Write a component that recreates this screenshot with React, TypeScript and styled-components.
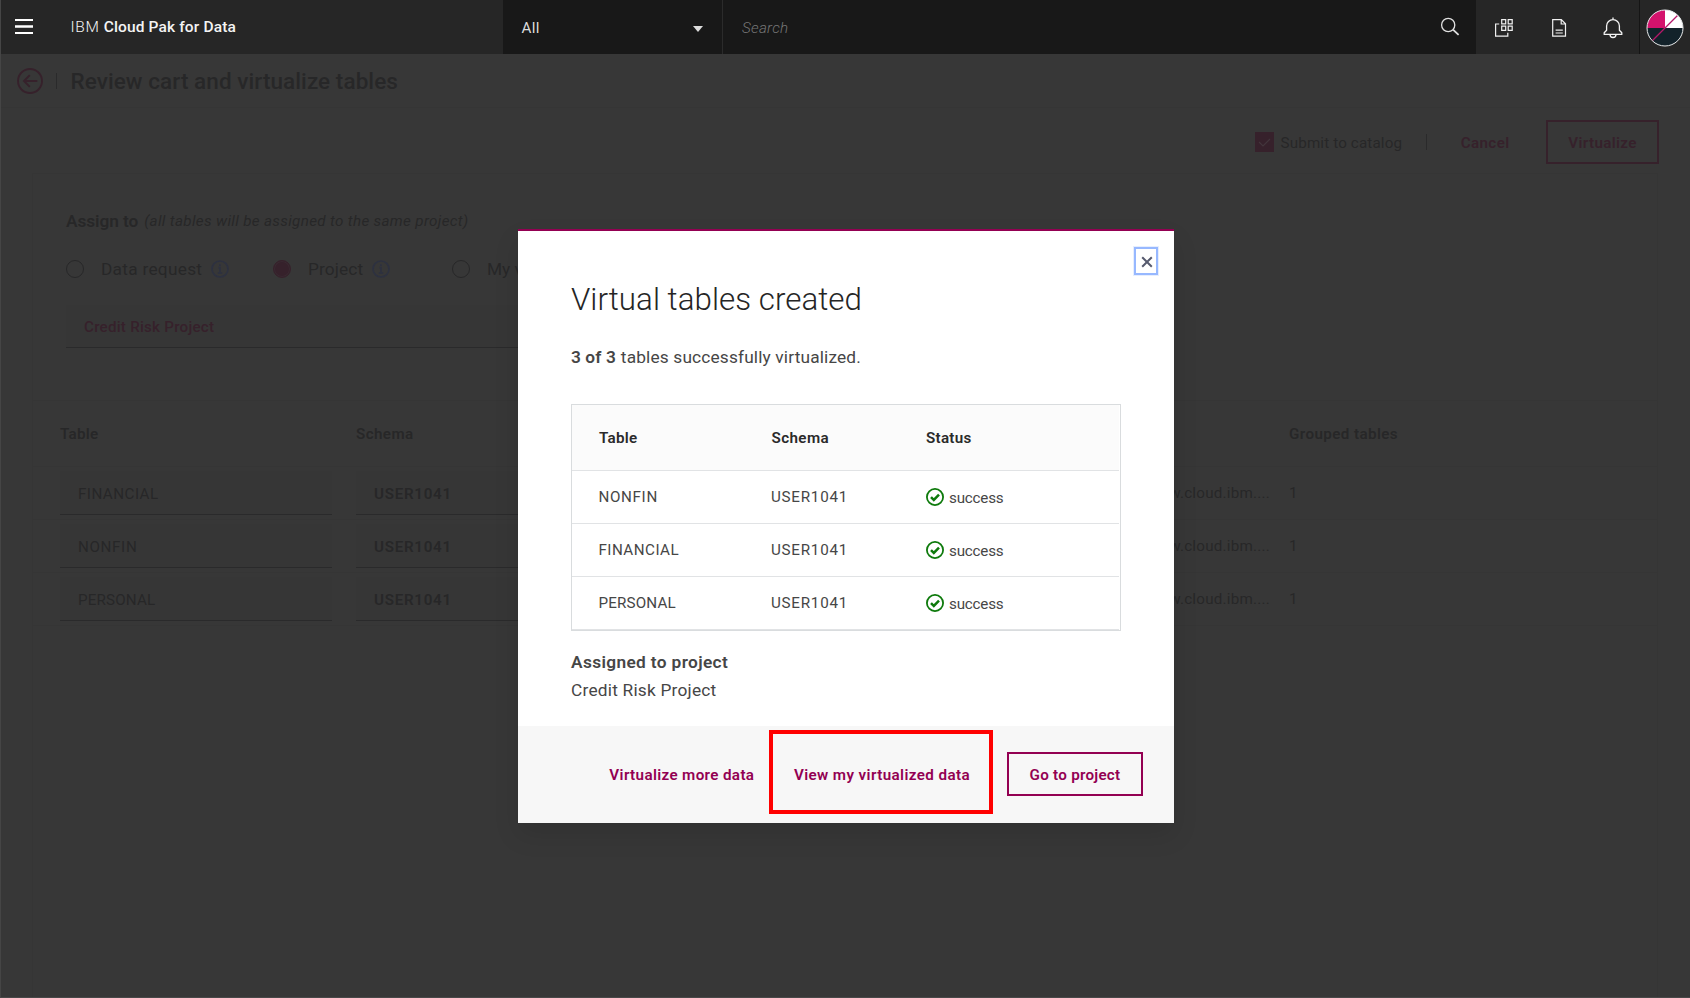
import React from "react";
import styled, { createGlobalStyle } from "styled-components";

const GlobalStyle = createGlobalStyle`
  *, *::after { box-sizing: border-box; }
  body {
    margin: 0;
    background: #373737;
    font-family: Roboto, "Liberation Sans", sans-serif;
    font-size: 15.2px;
    overflow: hidden;
  }
  h1, h2, p { margin: 0; font-weight: inherit; font-size: inherit; }
  button { font: inherit; background: none; border: 0; padding: 0; }
`;

const dim = {
  bg: "#373737",
  field: "#363636",
  line: "#353535",
  text: "#272728",
  soft: "#2a2a2b",
  pink: "#36212b",
  blue: "#2d3140",
};
const magenta = "#930052";

type TextProps = { $track?: number; $weight?: number; $size?: number; $italic?: boolean; $color?: string };

const Text = styled.span<TextProps>`
  letter-spacing: ${(p) => p.$track ?? 0}px;
  font-weight: ${(p) => p.$weight ?? 400};
  font-size: ${(p) => p.$size ?? 15.2}px;
  font-style: ${(p) => (p.$italic ? "italic" : "normal")};
  color: ${(p) => p.$color ?? "inherit"};
  white-space: nowrap;
`;

/* ---------- shell ---------- */
const Page = styled.div`
  position: relative;
  height: 998px;
  display: flex;
  flex-direction: column;
  border-left: 1px solid #454545;
  border-bottom: 1px solid #484848;
  background: ${dim.bg};
  color: ${dim.text};
  overflow: hidden;
`;

const Header = styled.header`
  flex: none;
  height: 54px;
  display: flex;
  background: #262626;
  color: #f4f4f4;
`;

const Brand = styled.div`
  width: 502px;
  display: flex;
  align-items: center;
  padding-left: 14px;
`;

const Product = styled.div`
  display: flex;
  gap: 4px;
  margin-left: 37.5px;
`;

const ScopeSelect = styled.div`
  width: 220px;
  display: flex;
  align-items: center;
  justify-content: space-between;
  padding: 1px 19px 0 18.5px;
  background: #181818;
  border-right: 1px solid #2b2b2b;
  color: #dcdcdc;
`;

const Caret = styled.i`
  margin-top: 3px;
  border: 5.5px solid transparent;
  border-top: 6px solid #dcdcdc;
  border-bottom: 0;
`;

const SearchBox = styled.div`
  flex: 1;
  display: flex;
  align-items: center;
  justify-content: space-between;
  padding: 0 16px 0 19px;
  background: #181818;

  span { padding-top: 2px; }
`;

const HeaderTools = styled.div`
  width: 214px;
  display: grid;
  grid-template-columns: 56px 54px 53px 51px;
`;

const Tool = styled.div<{ $divided?: boolean }>`
  display: flex;
  align-items: center;
  justify-content: center;
  padding-top: 1px;
  border-left: ${(p) => (p.$divided ? "1px solid #151515" : "0")};
`;

/* ---------- page behind the dialog ---------- */
const TitleBar = styled.div`
  flex: none;
  height: 54px;
  display: flex;
  align-items: center;
  padding-left: 16px;
  border-bottom: 1px solid ${dim.line};
`;

const Separator = styled.i`
  width: 1px;
  height: 16px;
  background: ${dim.soft};
`;

const BackMark = styled.div`
  display: flex;
  align-items: center;
  gap: 13px;
  margin-right: 13.5px;
`;

const Actions = styled.div`
  flex: none;
  height: 65px;
  padding: 12px 31px 0 0;
  display: flex;
  justify-content: flex-end;
`;

const ActionGroup = styled.div`
  height: 44px;
  display: flex;
  align-items: center;

  span { position: relative; top: 1px; }
`;

const Checkbox = styled.div`
  width: 19px;
  height: 20px;
  margin-right: 7px;
  display: flex;
  align-items: center;
  justify-content: center;
  background: ${dim.pink};
`;

const ActionSeparator = styled(Separator)`
  margin: 0 33.5px 0 24px;
`;

const Outline = styled.button<{ $w: number; $color: string }>`
  width: ${(p) => p.$w}px;
  height: 44px;
  border: 2px solid ${(p) => p.$color};
  color: ${(p) => p.$color};
`;

const VirtualizeButton = styled(Outline)`
  margin-left: 36.5px;
`;

const Card = styled.section`
  flex: 1;
  margin: 0 32px 0 31px;
  border: 1px solid #353535;
  border-bottom: 0;
  background: #373737;
`;

const AssignLine = styled.div`
  height: 30px;
  margin: 32px 0 0 33px;
  display: flex;
  align-items: center;
  gap: 6px;
`;

const RadioRow = styled.div`
  height: 30px;
  margin: 18px 0 0 33px;
  display: grid;
  grid-template-columns: 207px 179px auto;
  align-items: center;
`;

const RadioOption = styled.div`
  display: flex;
  align-items: center;
`;

const RadioDot = styled.i<{ $on?: boolean }>`
  width: 18px;
  height: 18px;
  margin-right: 17px;
  border-radius: 50%;
  border: 1px solid ${(p) => (p.$on ? dim.pink : dim.text)};
  background: ${(p) => (p.$on ? dim.pink : "transparent")};
  box-shadow: ${(p) => (p.$on ? "inset 0 0 0 1px #3a2a32" : "none")};
`;

const InfoGap = styled.div`
  display: flex;
  margin-left: 9px;
`;

const ProjectSelect = styled.div`
  width: 620px;
  height: 43px;
  margin: 21px 0 52px 33px;
  padding: 2px 0 0 18px;
  display: flex;
  align-items: center;
  background: ${dim.field};
  border-bottom: 1px solid #2a2a2b;
`;

const CartRow = styled.div<{ $head?: boolean }>`
  height: ${(p) => (p.$head ? 67 : 53)}px;
  padding-left: 27px;
  display: grid;
  grid-template-columns: 272px 272px 617px 1fr;
  column-gap: 24px;
  align-items: center;
  border-top: ${(p) => (p.$head ? `1px solid ${dim.line}` : "0")};
  border-bottom: 1px solid ${dim.line};
`;

const CartField = styled.div`
  height: 44px;
  padding: 2px 0 0 18px;
  display: flex;
  align-items: center;
  background: ${dim.field};
  border-bottom: 1px solid #2a2a2b;
`;

const HostCell = styled.div`
  margin-right: -1px;
  text-align: right;
`;

const GroupCell = styled.div`
  margin-left: -4px;
`;

/* ---------- dialog ---------- */
const Overlay = styled.div`
  position: absolute;
  inset: 54px 0 -1px 1px;
  display: flex;
  align-items: center;
  justify-content: center;
`;

const Dialog = styled.div`
  position: relative;
  width: 656px;
  height: 594px;
  display: flex;
  flex-direction: column;
  background: #fff;
  border-top: 2px solid ${magenta};
  box-shadow: 0 12px 24px rgba(0, 0, 0, 0.1);
  color: #464646;
`;

const DialogBody = styled.div`
  flex: 1;
  padding: 48px 53px 0 54px;
`;

const DialogTitle = styled.h2`
  height: 40px;
  line-height: 42px;
  margin-left: -1px;
  color: #252525;
`;

const Summary = styled.p`
  height: 26px;
  line-height: 26px;
  margin: 25px 0 34px -1px;
  display: flex;
  gap: 5px;
`;

const ResultTable = styled.div`
  margin-left: -1px;
  padding-right: 1px;
  border: 1px solid #d9dcde;
`;

const ResultRow = styled.div<{ $head?: boolean }>`
  height: ${(p) => (p.$head ? 66 : 53)}px;
  padding-left: ${(p) => (p.$head ? 27 : 26.5)}px;
  display: grid;
  grid-template-columns: 172.5px 154.5px 1fr;
  align-items: center;
  background: ${(p) => (p.$head ? "#fbfbfb" : "#fff")};
  color: ${(p) => (p.$head ? "#2a2a2a" : "inherit")};
  border-bottom: 1px solid #e1e3e5;
`;

const Status = styled.div`
  display: flex;
  align-items: center;
  gap: 5px;
  margin-left: 0.5px;

  span { margin-top: 2px; }
`;

const Assigned = styled.div`
  margin-top: 17px;
  margin-left: -1px;
  display: flex;
  flex-direction: column;
  line-height: 28px;
`;

const DialogFooter = styled.footer`
  height: 97px;
  padding: 0 31px 1px 0;
  display: flex;
  align-items: center;
  justify-content: flex-end;
  background: #f7f7f7;

  span { position: relative; top: 1px; }
`;

const LinkButton = styled.button<{ $gap: number; $marked?: boolean }>`
  position: relative;
  margin-right: ${(p) => p.$gap}px;
  color: ${magenta};

  &::after {
    content: "";
    display: ${(p) => (p.$marked ? "block" : "none")};
    position: absolute;
    top: 50%;
    left: -25px;
    width: 224px;
    height: 84px;
    margin-top: -44px;
    border: 4px solid #ff0000;
  }
`;

const CloseButton = styled.button`
  position: absolute;
  top: 16px;
  right: 16px;
  width: 24px;
  height: 28px;
  display: flex;
  align-items: center;
  justify-content: center;
  padding: 2px 0 0 1px;
  border: 2px solid #97b8ff;
  box-shadow: 0 0 0 1px #e6eefe;
`;

const Corner = styled.svg`
  position: absolute;
  left: -1px;
  bottom: -1px;
`;

/* ---------- icons ---------- */
const MenuIcon = () => (
  <svg width="18" height="16" viewBox="0 0 18 16" fill="#fff">
    <path d="M0 0h18v2H0zM0 6.3h18v2.4H0zM0 13h18v2H0z" />
  </svg>
);
const SearchIcon = () => (
  <svg width="20" height="20" viewBox="0 0 20 20" fill="none" stroke="#e0e0e0" strokeWidth="1.3">
    <circle cx="8.2" cy="8" r="6.6" />
    <path d="M13 12.7l5.6 5.2" strokeWidth="1.8" />
  </svg>
);
const AppsIcon = () => (
  <svg width="20" height="20" viewBox="0 0 20 20" fill="none" stroke="#f0f0f0" strokeWidth="1.2">
    <path d="M7.7 1.6h4v4.2h-4zM14.2 1.6h4v4.2h-4zM7.7 8.2h4v4.2h-4zM14.2 8.2h4v4.2h-4z" />
    <path d="M5.2 6H1.6v12.2h12.2v-3.4" />
  </svg>
);
const DocIcon = () => (
  <svg width="16" height="20" viewBox="0 0 16 20" fill="none" stroke="#f0f0f0" strokeWidth="1.2">
    <path d="M1.7 1.6h8.6l4.2 4.2v12.4H1.7zM10.2 1.8V6h4.1M4.6 12.2h7.2M4.6 15h7.2" />
  </svg>
);
const BellIcon = () => (
  <svg width="20" height="22" viewBox="0 0 20 22" fill="none" stroke="#f4f4f4" strokeWidth="1.3" strokeLinejoin="round">
    <path d="M10 .6v2M3.6 13.2V9a6.4 6.4 0 0 1 12.8 0v4.2l2.4 2.6v1.6H1.2v-1.6zM7 17.5a3 3 0 0 0 6 0" />
  </svg>
);
const Avatar = () => (
  <svg width="38" height="38" viewBox="0 0 38 38">
    <circle cx="19" cy="19" r="18" fill="#13222a" />
    <path d="M19 19H1A18 18 0 0 1 19 1z" fill="#d4126c" />
    <path d="M19 19V1a18 18 0 0 1 18 18z" fill="#fff" />
    <path d="M6.5 31.5l25-25" stroke="#b5186a" strokeWidth="1.3" />
    <circle cx="19" cy="19" r="18" fill="none" stroke="#e8eaeb" strokeWidth="1" />
  </svg>
);
const BackIcon = () => (
  <svg width="26" height="26" viewBox="0 0 26 26" fill="none" stroke={dim.pink} strokeWidth="1.9">
    <circle cx="13" cy="13" r="12" />
    <path d="M20.3 13H7.2M12.8 7.2L7 13l5.8 5.8" />
  </svg>
);
const CheckIcon = () => (
  <svg width="13" height="10" viewBox="0 0 13 10" fill="none" stroke="#43363c" strokeWidth="1.1">
    <path d="M1 5l4 4L12 2" />
  </svg>
);
const InfoIcon = () => (
  <svg width="18" height="18" viewBox="0 0 18 18" fill="none" stroke={dim.blue} strokeWidth="1.7">
    <circle cx="9" cy="9" r="8" />
    <path d="M7.4 7.7H9V13M6.9 13h4.4M8.9 4.2v1.8" />
  </svg>
);
const SuccessIcon = () => (
  <svg width="18" height="18" viewBox="0 0 18 18" fill="none" stroke="#0e7a0c">
    <circle cx="9" cy="9" r="8.1" strokeWidth="1.8" />
    <path d="M5 9.2l2.8 2.7 5.2-5.3" strokeWidth="2.5" />
  </svg>
);
const CloseIcon = () => (
  <svg width="12" height="12" viewBox="0 0 12 12" stroke="#565a6e" strokeWidth="2">
    <path d="M1.2 1.2l9.6 9.6M10.8 1.2L1.2 10.8" />
  </svg>
);

/* ---------- data ---------- */
const tracking: Record<string, number> = { FINANCIAL: 0.46, NONFIN: 0.65, PERSONAL: 0.16 };
const cart = ["FINANCIAL", "NONFIN", "PERSONAL"];
const results = ["NONFIN", "FINANCIAL", "PERSONAL"];

export default function App() {
  return (
    <Page>
      <GlobalStyle />
      <Header>
        <Brand>
          <MenuIcon />
          <Product>
            <Text $weight={300} $size={15.5} $track={0.7}>IBM</Text>
            <Text $weight={500} $size={15.5} $track={0.14}>Cloud Pak for Data</Text>
          </Product>
        </Brand>
        <ScopeSelect>
          <Text $track={0.3}>All</Text>
          <Caret />
        </ScopeSelect>
        <SearchBox>
          <Text $weight={300} $italic $track={0.27} $color="#767676">Search</Text>
          <SearchIcon />
        </SearchBox>
        <HeaderTools>
          <Tool><AppsIcon /></Tool>
          <Tool><DocIcon /></Tool>
          <Tool><BellIcon /></Tool>
          <Tool $divided><Avatar /></Tool>
        </HeaderTools>
      </Header>

      <TitleBar>
        <BackMark>
          <BackIcon />
          <Separator />
        </BackMark>
        <h1><Text $weight={500} $size={22.5} $track={0.07}>Review cart and virtualize tables</Text></h1>
      </TitleBar>

      <Actions>
        <ActionGroup>
          <Checkbox><CheckIcon /></Checkbox>
          <Text $track={0.14}>Submit to catalog</Text>
          <ActionSeparator />
          <Text $weight={600} $track={0.37} $color={dim.pink}>Cancel</Text>
          <VirtualizeButton $w={113} $color={dim.pink}>
            <Text $weight={600} $track={0.35}>Virtualize</Text>
          </VirtualizeButton>
        </ActionGroup>
      </Actions>

      <Card>
        <AssignLine>
          <Text $weight={600} $size={17.3} $track={-0.08}>Assign to</Text>
          <Text $italic $track={0.33}>(all tables will be assigned to the same project)</Text>
        </AssignLine>
        <RadioRow>
          <RadioOption>
            <RadioDot />
            <Text $size={17.3} $track={0.27}>Data request</Text>
            <InfoGap><InfoIcon /></InfoGap>
          </RadioOption>
          <RadioOption>
            <RadioDot $on />
            <Text $size={17.3} $track={0.1}>Project</Text>
            <InfoGap><InfoIcon /></InfoGap>
          </RadioOption>
          <RadioOption>
            <RadioDot />
            <Text $size={17.3}>My virtualized data</Text>
          </RadioOption>
        </RadioRow>
        <ProjectSelect>
          <Text $weight={500} $track={0.23} $color={dim.pink}>Credit Risk Project</Text>
        </ProjectSelect>

        <CartRow $head>
          <Text $weight={600} $track={0.27}>Table</Text>
          <Text $weight={600} $track={0.39}>Schema</Text>
          <span />
          <GroupCell><Text $weight={600} $track={0.4}>Grouped tables</Text></GroupCell>
        </CartRow>
        {cart.map((name) => (
          <CartRow key={name}>
            <CartField><Text $track={tracking[name]}>{name}</Text></CartField>
            <CartField><Text $weight={600} $track={0.7}>USER1041</Text></CartField>
            <HostCell><Text $track={0.23}>w.cloud.ibm....</Text></HostCell>
            <GroupCell><Text>1</Text></GroupCell>
          </CartRow>
        ))}
      </Card>

      <Overlay>
        <Dialog role="dialog">
          <CloseButton aria-label="Close"><CloseIcon /></CloseButton>
          <DialogBody>
            <DialogTitle><Text $weight={300} $size={31.3} $track={0.03}>Virtual tables created</Text></DialogTitle>
            <Summary>
              <Text $weight={600} $size={17.3} $track={0.1}>3 of 3</Text>
              <Text $size={17.3} $track={0.16}>tables successfully virtualized.</Text>
            </Summary>
            <ResultTable>
              <ResultRow $head>
                <Text $weight={600} $track={0.27}>Table</Text>
                <Text $weight={600} $track={0.39}>Schema</Text>
                <Text $weight={600} $track={0.28}>Status</Text>
              </ResultRow>
              {results.map((name) => (
                <ResultRow key={name}>
                  <Text $track={tracking[name]}>{name}</Text>
                  <Text $track={0.75}>USER1041</Text>
                  <Status>
                    <SuccessIcon />
                    <Text $track={-0.2}>success</Text>
                  </Status>
                </ResultRow>
              ))}
            </ResultTable>
            <Assigned>
              <Text $weight={600} $size={17.3} $track={0.36}>Assigned to project</Text>
              <Text $size={17.3} $track={0.22}>Credit Risk Project</Text>
            </Assigned>
          </DialogBody>
          <DialogFooter>
            <LinkButton $gap={39.5}><Text $weight={600} $track={0.36}>Virtualize more data</Text></LinkButton>
            <LinkButton $gap={37} $marked><Text $weight={600} $track={0.4}>View my virtualized data</Text></LinkButton>
            <Outline $w={136} $color={magenta}><Text $weight={600} $track={0.26}>Go to project</Text></Outline>
          </DialogFooter>
        </Dialog>
      </Overlay>
      <Corner width="4" height="4" viewBox="0 0 4 4"><path d="M0 0v4h4A4 4 0 0 1 0 0z" fill="#1b4f9c" /></Corner>
    </Page>
  );
}
